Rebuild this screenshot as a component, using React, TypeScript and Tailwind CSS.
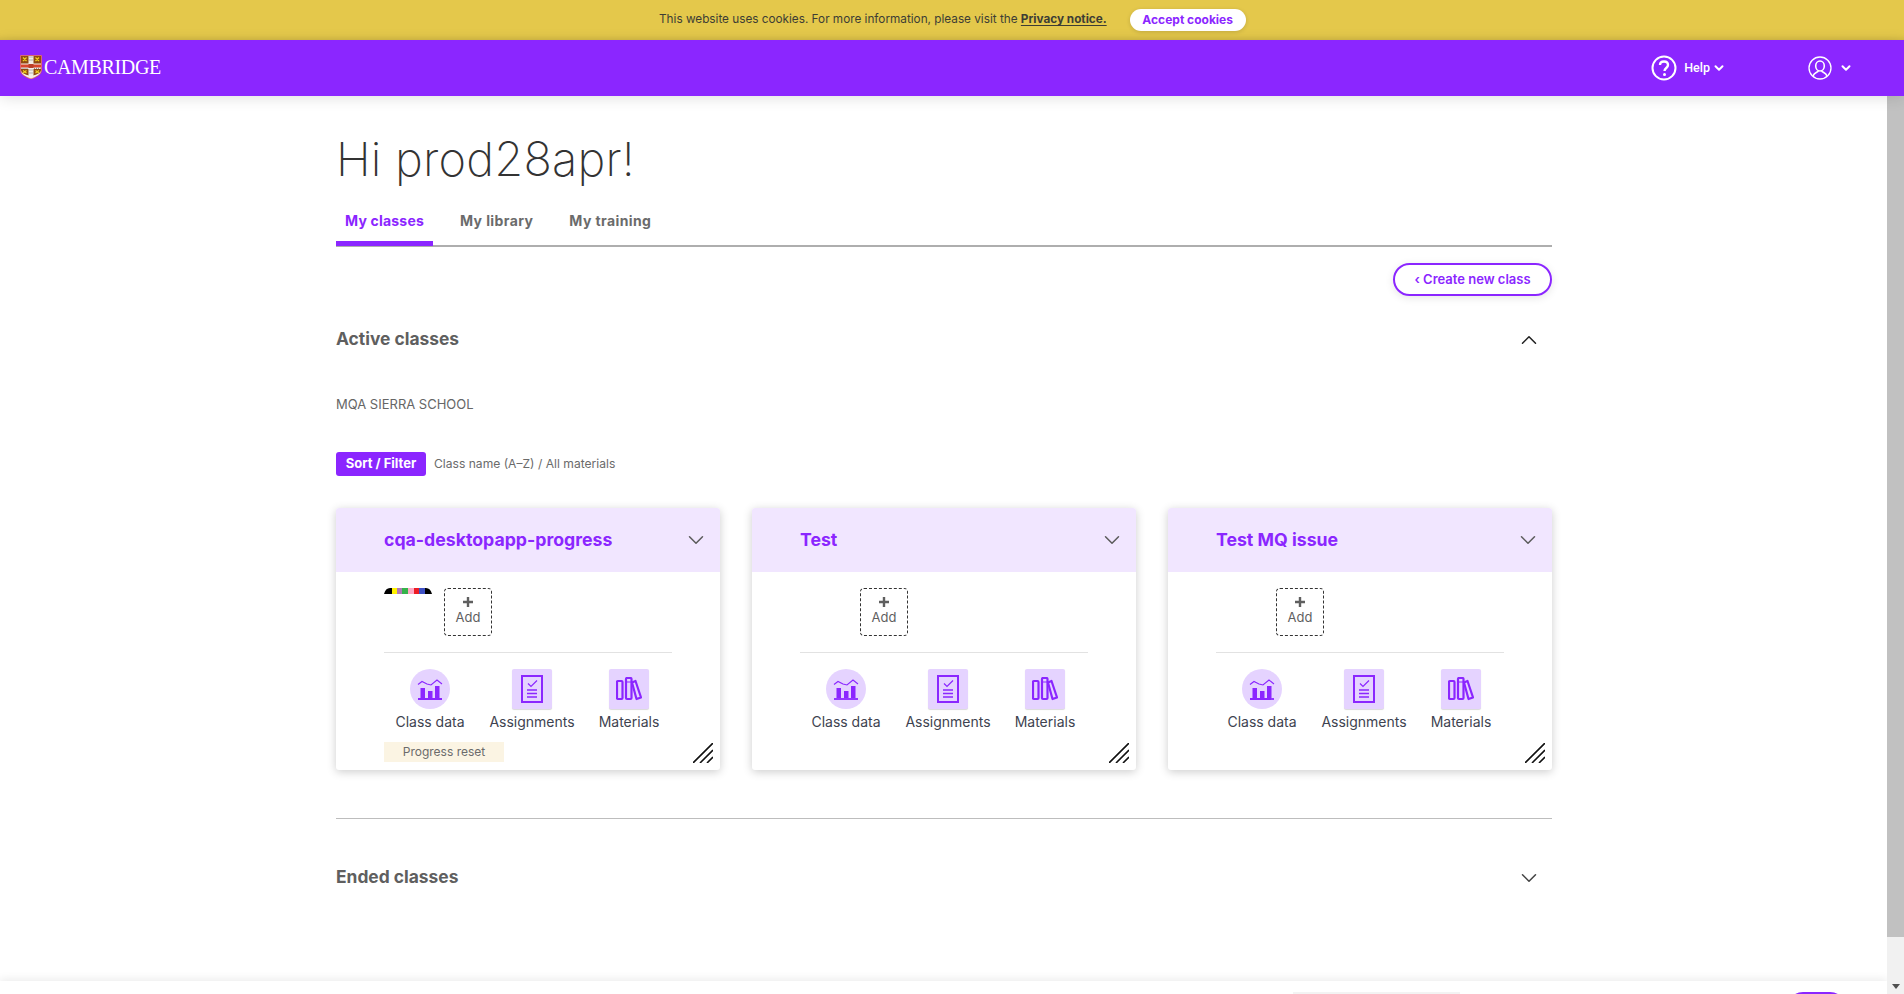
import React from "react";
import { ChevronDown, ChevronUp } from "lucide-react";

const F = "font-['Inter','Liberation_Sans',sans-serif]";

function Shield() {
  return (
    <svg width="22" height="24" viewBox="0 0 22 24" className="shrink-0 -mt-[2px]">
      <path d="M0.5 0.5H21.5V15C21.5 20 15 22.5 11 24C7 22.5 0.5 20 0.5 15Z" fill="#f4efe9" stroke="#e4583a" strokeWidth="0.7" />
      <rect x="1" y="1" width="7.5" height="7.5" fill="#8f4a12" />
      <rect x="13.5" y="1" width="7.5" height="7.5" fill="#8f4a12" />
      <path d="M1 14H8.5V20.5C5.5 19.5 1 18 1 15Z" fill="#8f4a12" />
      <path d="M13.5 14H21V15C21 18 16.5 19.5 13.5 20.5Z" fill="#8f4a12" />
      <rect x="1" y="9.5" width="20" height="3" fill="#d9452c" />
      <rect x="8.5" y="9" width="5" height="4" fill="#b8402a" />
      <path d="M3 2.5L6.5 6M6.5 2.5L3 6M15.5 2.5L19 6M19 2.5L15.5 6M3 15.5L6.5 18M6.5 15.5L3 18M15.5 15.5L19 18M19 15.5L15.5 18" stroke="#f2d21f" strokeWidth="1.2" />
      <path d="M9.5 2H12.5M9.5 5H12.5M9.5 15H12.5M9.5 18H12.5M1.5 13.3H8M14 13.3H20.5" stroke="#777" strokeWidth="1" strokeDasharray="1 1" />
    </svg>
  );
}

function DataIcon() {
  return (
    <svg width="26" height="22" viewBox="0 0 26 22" fill="none" stroke="#8b26ff">
      <path d="M1 6.5L5 3.5L10 6L14 7L20 2L25 6" strokeWidth="1.1" />
      <path d="M1 21H25" strokeWidth="1.8" />
      <g fill="#8b26ff" stroke="none">
        <rect x="3.5" y="10" width="4.5" height="10" />
        <rect x="11" y="13" width="4.5" height="7" />
        <rect x="18" y="8" width="4.5" height="12" />
      </g>
    </svg>
  );
}

function AssignmentIcon() {
  return (
    <svg width="22" height="28" viewBox="0 0 22 28" fill="none" stroke="#8b26ff">
      <rect x="1" y="1" width="20" height="26" strokeWidth="2" />
      <path d="M7 8.5L10 11.5L16 5.5" strokeWidth="1.2" />
      <path d="M6 15H16M6 18.5H16M6 22H16" strokeWidth="1.4" />
    </svg>
  );
}

function BooksIcon() {
  return (
    <svg width="26" height="24" viewBox="0 0 26 24" fill="none" stroke="#8b26ff" strokeWidth="2.2">
      <rect x="1" y="4" width="5.5" height="18" rx="1" />
      <rect x="10" y="1" width="5.5" height="21" rx="1" />
      <path d="M16 5.5L19.5 4L25 20.5L20.5 22Z" strokeLinejoin="round" />
      <path d="M10 5H15.5" strokeWidth="1" />
    </svg>
  );
}

function Tool({ label, round, children }: { label: string; round?: boolean; children: React.ReactNode }) {
  return (
    <div className="flex flex-col items-center">
      <div
        className={
          round
            ? "w-10 h-10 rounded-full bg-[#e5d3ff] flex items-center justify-center"
            : "w-10 h-10 rounded-[2px] bg-[#e5d3ff] flex items-center justify-center shadow-[0_1px_1px_rgba(0,0,0,0.15)]"
        }
      >
        {children}
      </div>
      <span className="mt-[3px] text-[14px] leading-[20px] text-[#3e4350] whitespace-nowrap">{label}</span>
    </div>
  );
}

function Card({ title, students, badge }: { title: string; students?: boolean; badge?: boolean }) {
  return (
    <div className="relative h-[262px] rounded-[3px] bg-white shadow-[0_2px_10px_rgba(0,0,0,0.2)] overflow-hidden">
      <div className="h-16 bg-[#f1e6ff] flex items-center justify-between pl-12 pr-[11px]">
        <span className="text-[17.7px] font-bold text-[#8b26ff]">{title}</span>
        <ChevronDown size={26} strokeWidth={1.4} className="text-[#5d5d5d]" />
      </div>
      <div className="pl-12 pr-12 pt-4">
        <div className="flex gap-3 h-12">
          <div className="w-12">
            {students && (
              <svg width="48" height="6" viewBox="0 0 48 6" className="block">
                <path d="M0 6C1 2 3 0 6 0H42C45 0 47 2 48 6Z" fill="#000" />
                <rect x="8" y="0" width="5" height="6" fill="#fff200" />
                <rect x="13" y="0" width="5" height="6" fill="#b07ab5" />
                <rect x="18" y="0" width="6" height="6" fill="#35b34a" />
                <rect x="24" y="0" width="6" height="6" fill="#ffa8c5" />
                <rect x="30" y="0" width="5" height="6" fill="#ed1c24" />
                <rect x="35" y="0" width="6" height="6" fill="#3f51c5" />
              </svg>
            )}
          </div>
          <div className="w-12 h-12 pb-[2px] rounded-[4px] border border-dashed border-[#333] flex flex-col items-center justify-center text-[#5f5f5f]">
            <svg width="10" height="10" viewBox="0 0 10 10" fill="#5f5f5f" className="mb-[2px]">
              <path d="M3.8 0H6.2V3.8H10V6.2H6.2V10H3.8V6.2H0V3.8H3.8Z" />
            </svg>
            <span className="text-[13px] leading-[16px]">Add</span>
          </div>
        </div>
        <div className="mt-4 h-px bg-[#e2e2e2]" />
        <div className="mt-4 grid grid-cols-[92px_112px_82px]">
          <Tool label="Class data" round>
            <DataIcon />
          </Tool>
          <Tool label="Assignments">
            <AssignmentIcon />
          </Tool>
          <Tool label="Materials">
            <BooksIcon />
          </Tool>
        </div>
        {badge && (
          <div className="mt-[10px] w-[120px] h-5 bg-[#fbf4e3] flex items-center justify-center text-[12px] text-[#6b6b6b]">
            Progress reset
          </div>
        )}
      </div>
      <svg width="20" height="20" viewBox="0 0 20 20" className="absolute right-[7px] bottom-[7px]" stroke="#111" strokeWidth="1.6">
        <path d="M0 20L20 0M7 20L20 7M14 20L20 14" />
      </svg>
    </div>
  );
}

export default function App() {
  return (
    <div className={`${F} h-screen overflow-hidden flex flex-col bg-white`}>
      <div className="h-10 shrink-0 bg-[#e4c84b] shadow-[inset_0_-6px_6px_-6px_rgba(0,0,0,0.12)] flex items-center pl-[659px]">
        <span className="text-[11.75px] text-[#3d3d35] whitespace-nowrap">
          This website uses cookies. For more information, please visit the{" "}
          <span className="font-bold underline underline-offset-2">Privacy notice.</span>
        </span>
        <span className="ml-[23px] w-[116px] h-[22px] rounded-full bg-white text-[12px] font-bold text-[#8b26ff] flex items-center justify-center shadow-[0_1px_4px_rgba(0,0,0,0.15)]">
          Accept cookies
        </span>
      </div>
      <div className="relative z-10 h-14 shrink-0 bg-[#8b26ff] shadow-[0_2px_14px_rgba(0,0,0,0.12)] flex items-center pl-5 text-white">
        <Shield />
        <span className="ml-[2px] -mt-[2px] font-['Liberation_Serif',serif] text-[20px] tracking-[-0.35px]">CAMBRIDGE</span>
        <div className="ml-auto flex items-center">
          <svg width="26" height="26" viewBox="0 0 26 26" fill="none" stroke="#fff">
            <circle cx="13" cy="13" r="11.5" strokeWidth="2" />
            <path d="M9 10C9 7.5 11 6.5 13 6.5C15.5 6.5 17 8 17 10C17 13 13.5 13 13.5 16" strokeWidth="2.4" />
            <circle cx="13.5" cy="19.5" r="1.5" fill="#fff" stroke="none" />
          </svg>
          <span className="ml-[7px] font-['Roboto',sans-serif] text-[12.5px] font-medium">Help</span>
          <ChevronDown size={14} strokeWidth={3.4} className="ml-[2px]" />
          <svg width="24" height="24" viewBox="0 0 24 24" fill="none" stroke="#fff" strokeWidth="1.3" className="ml-[82px]">
            <circle cx="12" cy="12" r="11" />
            <ellipse cx="12" cy="10" rx="4.3" ry="5" strokeWidth="1.6" />
            <path d="M5 20C6 17 9 16.5 10.5 15M19 20C18 17 15 16.5 13.5 15" strokeWidth="1.6" />
          </svg>
          <ChevronDown size={14} strokeWidth={3.4} className="ml-[7px] mr-[51px]" />
        </div>
      </div>
      <div className="flex-1 min-h-0 flex">
        <div className="flex-1 min-w-0 flex flex-col">
          <div className="flex-1 min-h-0 overflow-hidden">
            <div className="ml-[336px] w-[1216px]">
              <h1 className="mt-[28px] text-[47px] leading-[70px] font-extralight tracking-[0.2px] text-[#333]">Hi prod28apr!</h1>
              <div className="mt-[3px] h-[50px] border-b-2 border-[#aeaeae] flex items-end">
                <div className="h-[50px] -mb-[1px] pt-[4px] w-[97px] border-b-[5px] border-[#8b26ff] flex items-center justify-center text-[14px] font-bold tracking-[0.2px] text-[#8b26ff]">
                  My classes
                </div>
                <div className="h-[50px] -mb-[1px] pt-[4px] pl-[27px] border-b-[5px] border-transparent flex items-center text-[14px] font-bold tracking-[0.4px] text-[#6b6b6b]">My library</div>
                <div className="h-[50px] -mb-[1px] pt-[4px] pl-[36px] border-b-[5px] border-transparent flex items-center text-[14px] font-bold tracking-[0.4px] text-[#6b6b6b]">My training</div>
              </div>
              <div className="mt-4 flex justify-end">
                <div className="w-[159px] h-[33px] rounded-full border-2 border-[#8b26ff] flex items-center justify-center text-[13px] font-semibold text-[#8b26ff] shadow-[0_2px_8px_rgba(0,0,0,0.1)]">
                  ‹ Create new class
                </div>
              </div>
              <div className="mt-[28px] flex items-center justify-between pr-[10px]">
                <span className="text-[17.4px] leading-[30px] font-bold text-[#5f5f5f]">Active classes</span>
                <ChevronUp size={26} strokeWidth={1.4} className="mt-[2px] text-[#222]" />
              </div>
              <div className="mt-[40px] text-[13px] leading-[20px] text-[#666]">MQA SIERRA SCHOOL</div>
              <div className="mt-[38px] flex items-center">
                <div className="w-[90px] h-6 rounded-[3px] bg-[#8b26ff] text-white text-[13px] font-bold flex items-center justify-center">Sort / Filter</div>
                <span className="ml-2 text-[12.1px] text-[#6b6b6b]">Class name (A–Z) / All materials</span>
              </div>
              <div className="mt-8 grid grid-cols-3 gap-8">
                <Card title="cqa-desktopapp-progress" students badge />
                <Card title="Test" />
                <Card title="Test MQ issue" />
              </div>
              <div className="mt-12 h-px bg-[#bdbdbd]" />
              <div className="mt-[43px] flex items-center justify-between pr-[10px]">
                <span className="text-[17.4px] leading-[30px] font-bold text-[#5f5f5f]">Ended classes</span>
                <ChevronDown size={26} strokeWidth={1.4} className="mt-[2px] text-[#444]" />
              </div>
            </div>
          </div>
          <div className="h-[13px] shrink-0 shadow-[0_-2px_8px_rgba(0,0,0,0.08)] bg-white overflow-hidden pt-[11px] pl-[1293px] flex items-start">
            <div className="w-[167px] h-8 bg-[#f3f3f3]" />
            <div className="ml-[327px] w-[59px] h-8 rounded-full bg-[#8b26ff]" />
          </div>
        </div>
        <div className="w-[17px] shrink-0 bg-[#f1f1f1] flex flex-col">
          <div className="h-[841px] bg-[#c1c1c1]" />
          <div className="flex-1 flex items-end justify-center pb-[5px]">
            <div className="w-0 h-0 border-l-[4px] border-r-[4px] border-t-[5px] border-l-transparent border-r-transparent border-t-[#505050]" />
          </div>
        </div>
      </div>
    </div>
  );
}
